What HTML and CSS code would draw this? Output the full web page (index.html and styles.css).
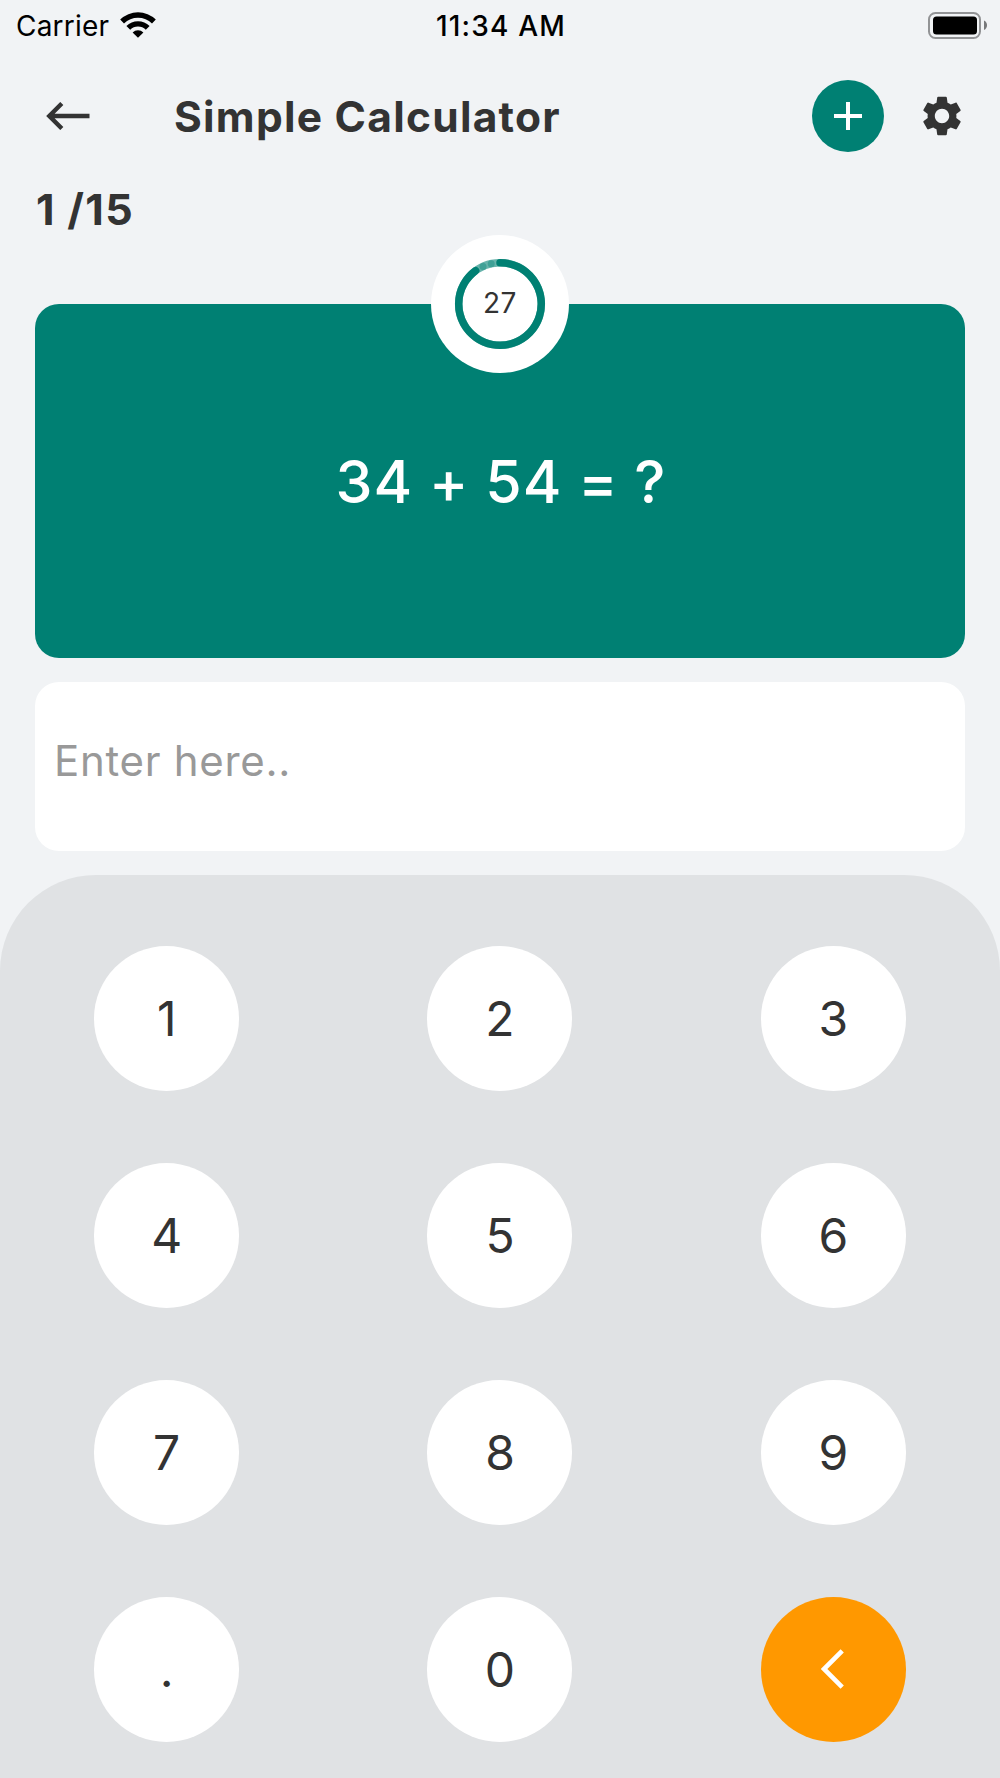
FILE: index.html
```
<!DOCTYPE html>
<html lang="en">
<head>
	<meta charset="UTF-8">
	<title>Simple Calculator</title>
	<link rel="stylesheet" href="styles.css">
</head>
<body>

<div class="status">
	<div class="status-left">
		<span class="carrier">Carrier</span>
		<svg class="wifi" width="38" height="28" viewBox="0 0 38 28">
			<path d="M1.2 8.6 A25.5 25.5 0 0 1 36.8 8.6 L33 12.4 A20 20 0 0 0 5 12.4 Z"/>
			<path d="M7.4 14.9 A16.6 16.6 0 0 1 30.6 14.9 L26.8 18.7 A11.2 11.2 0 0 0 11.2 18.7 Z"/>
			<path d="M13.6 21.4 A7.8 7.8 0 0 1 24.4 21.4 L19 26.8 Z"/>
		</svg>
	</div>
	<div class="time">11:34 AM</div>
	<div class="status-right">
		<svg class="battery" width="60" height="28" viewBox="0 0 60 28">
			<rect x="1" y="1" width="51" height="25" rx="6.5" fill="none" stroke="#929395" stroke-width="2"/>
			<rect x="5" y="4.5" width="44" height="18" rx="3.5"/>
			<path d="M56 8.5 C60 10 60 16.5 56 18 Z" fill="#77787a"/>
		</svg>
	</div>
</div>

<div class="header">
	<svg class="back" width="44" height="28" viewBox="0 0 44 28">
		<path d="M43.5 14 H3.5 M15.8 1.5 L3.3 14 L15.8 26.5" fill="none" stroke="#333" stroke-width="4.4"/>
	</svg>
	<h1>Simple Calculator</h1>
	<button class="add">
		<svg width="28" height="28" viewBox="0 0 28 28">
			<path d="M14 0 V28 M0 14 H28" stroke="#fff" stroke-width="4"/>
		</svg>
	</button>
	<svg class="gear" width="48" height="48" viewBox="0 0 24 24">
		<path fill="#333" d="M19.14 12.94c.04-.3.06-.61.06-.94 0-.32-.02-.64-.07-.94l2.03-1.58c.18-.14.23-.41.12-.61l-1.92-3.32c-.12-.22-.37-.29-.59-.22l-2.39.96c-.5-.38-1.03-.7-1.62-.94l-.36-2.54c-.04-.24-.24-.41-.48-.41h-3.84c-.24 0-.43.17-.47.41l-.36 2.54c-.59.24-1.13.57-1.62.94l-2.39-.96c-.22-.08-.47 0-.59.22L2.74 8.87c-.12.21-.08.47.12.61l2.03 1.58c-.05.3-.09.63-.09.94s.02.64.07.94l-2.03 1.58c-.18.14-.23.41-.12.61l1.92 3.32c.12.22.37.29.59.22l2.39-.96c.5.38 1.03.7 1.62.94l.36 2.54c.05.24.24.41.48.41h3.84c.24 0 .44-.17.47-.41l.36-2.54c.59-.24 1.13-.56 1.62-.94l2.39.96c.22.08.47 0 .59-.22l1.92-3.32c.12-.22.07-.47-.12-.61l-2.01-1.58zM12 15.6c-1.98 0-3.6-1.62-3.6-3.6s1.62-3.6 3.6-3.6 3.6 1.62 3.6 3.6-1.62 3.6-3.6 3.6z"/>
	</svg>
</div>

<div class="count">1 /15</div>

<div class="question">
	<div class="timer">
		<svg class="ring" width="138" height="138" viewBox="-69 -69 138 138">
			<circle class="track" r="41.3"/>
			<path class="left" d="M0 -41.3 A41.3 41.3 0 1 1 -24.3 -33.4"/>
			<circle class="dot" cx="-17" cy="-37.6" r="3.5"/>
			<circle class="dot" cx="-8.8" cy="-40.3" r="3.5"/>
		</svg>
		<span class="seconds">27</span>
	</div>
	<div class="equation">34 + 54 = ?</div>
</div>

<div class="answer">Enter here..</div>

<div class="keypad">
	<button class="key">1</button>
	<button class="key">2</button>
	<button class="key">3</button>
	<button class="key">4</button>
	<button class="key">5</button>
	<button class="key">6</button>
	<button class="key">7</button>
	<button class="key">8</button>
	<button class="key">9</button>
	<button class="key">.</button>
	<button class="key">0</button>
	<button class="key delete">
		<svg width="24" height="40" viewBox="0 0 24 40">
			<path d="M21.2 1.8 L3 20 L21.2 38.2" fill="none" stroke="#fff" stroke-width="4.6"/>
		</svg>
	</button>
</div>

</body>
</html>
```
FILE: styles.css
```
* {
	box-sizing: border-box;
}
body {
	margin: 0;
	width: 1000px;
	height: 1778px;
	overflow: hidden;
	background-color: #f1f3f5;
	color: #333;
	font-family: Inter, "Liberation Sans", sans-serif;
}
button {
	display: flex;
	align-items: center;
	justify-content: center;
	padding: 0;
	border: none;
	border-radius: 50%;
	font-family: inherit;
	color: inherit;
}
.status {
	display: grid;
	grid-template-columns: 1fr auto 1fr;
	align-items: center;
	height: 50px;
	padding: 1px 12px 0 16px;
	color: #000;
	font-size: 28px;
}
.status-left {
	display: flex;
	align-items: center;
	gap: 10px;
}
.carrier {
	letter-spacing: 0.2px;
}
.wifi {
	margin-bottom: 2px;
}
.time {
	margin-right: 2px;
	font-weight: 500;
	letter-spacing: 1.2px;
}
.status-right {
	display: flex;
	justify-content: flex-end;
	margin-top: 1px;
}
.header {
	display: flex;
	align-items: center;
	height: 132px;
	padding: 0 34px 0 46px;
}
h1 {
	flex: 1;
	margin: 0 0 0 84px;
	font-size: 42.5px;
	font-weight: 700;
	letter-spacing: 1.25px;
}
.add {
	width: 72px;
	height: 72px;
	background-color: #008073;
}
.gear {
	margin-left: 34px;
}
.count {
	height: 121.5px;
	padding: 1px 0 0 36px;
	font-size: 43px;
	font-weight: 700;
	letter-spacing: 1.3px;
}
.question {
	position: relative;
	display: flex;
	align-items: center;
	justify-content: center;
	height: 354.5px;
	margin: 0 35px;
	border-radius: 24px;
	background-color: #008073;
}
/* countdown sits on the top edge of the card */
.timer {
	position: absolute;
	top: -69px;
	left: 396px;
	display: grid;
	place-items: center;
	width: 138px;
	height: 138px;
	border-radius: 50%;
	background-color: #fff;
}
.ring,
.seconds {
	grid-area: 1 / 1;
}
.ring circle,
.ring path {
	fill: none;
	stroke: #008073;
	stroke-width: 7.5;
}
.ring .track {
	stroke: #66b3ab;
}
.ring .left {
	stroke-linecap: round;
}
.ring .dot {
	fill: #3fa096;
	stroke: none;
}
.seconds {
	margin-bottom: 1px;
	font-size: 28px;
	letter-spacing: 0.5px;
}
.equation {
	padding: 2px 0 0 2px;
	color: #fff;
	font-size: 59px;
	font-weight: 500;
	letter-spacing: 1.1px;
	word-spacing: -1.2px;
}
.answer {
	height: 169px;
	margin: 24px 35px;
	padding: 53px 19px;
	border-radius: 24px;
	background-color: #fff;
	color: #999;
	font-size: 42px;
	letter-spacing: 0.7px;
}
.keypad {
	display: grid;
	grid-template-columns: repeat(3, 1fr);
	grid-auto-rows: 145px;
	row-gap: 71.9px;
	justify-items: center;
	height: 903px;
	padding-top: 71px;
	border-radius: 96px 96px 0 0;
	background-color: #e0e2e4;
}
.key {
	width: 145px;
	height: 145px;
	background-color: #fff;
	font-size: 48px;
}
.delete {
	background-color: #ff9800;
}
```
